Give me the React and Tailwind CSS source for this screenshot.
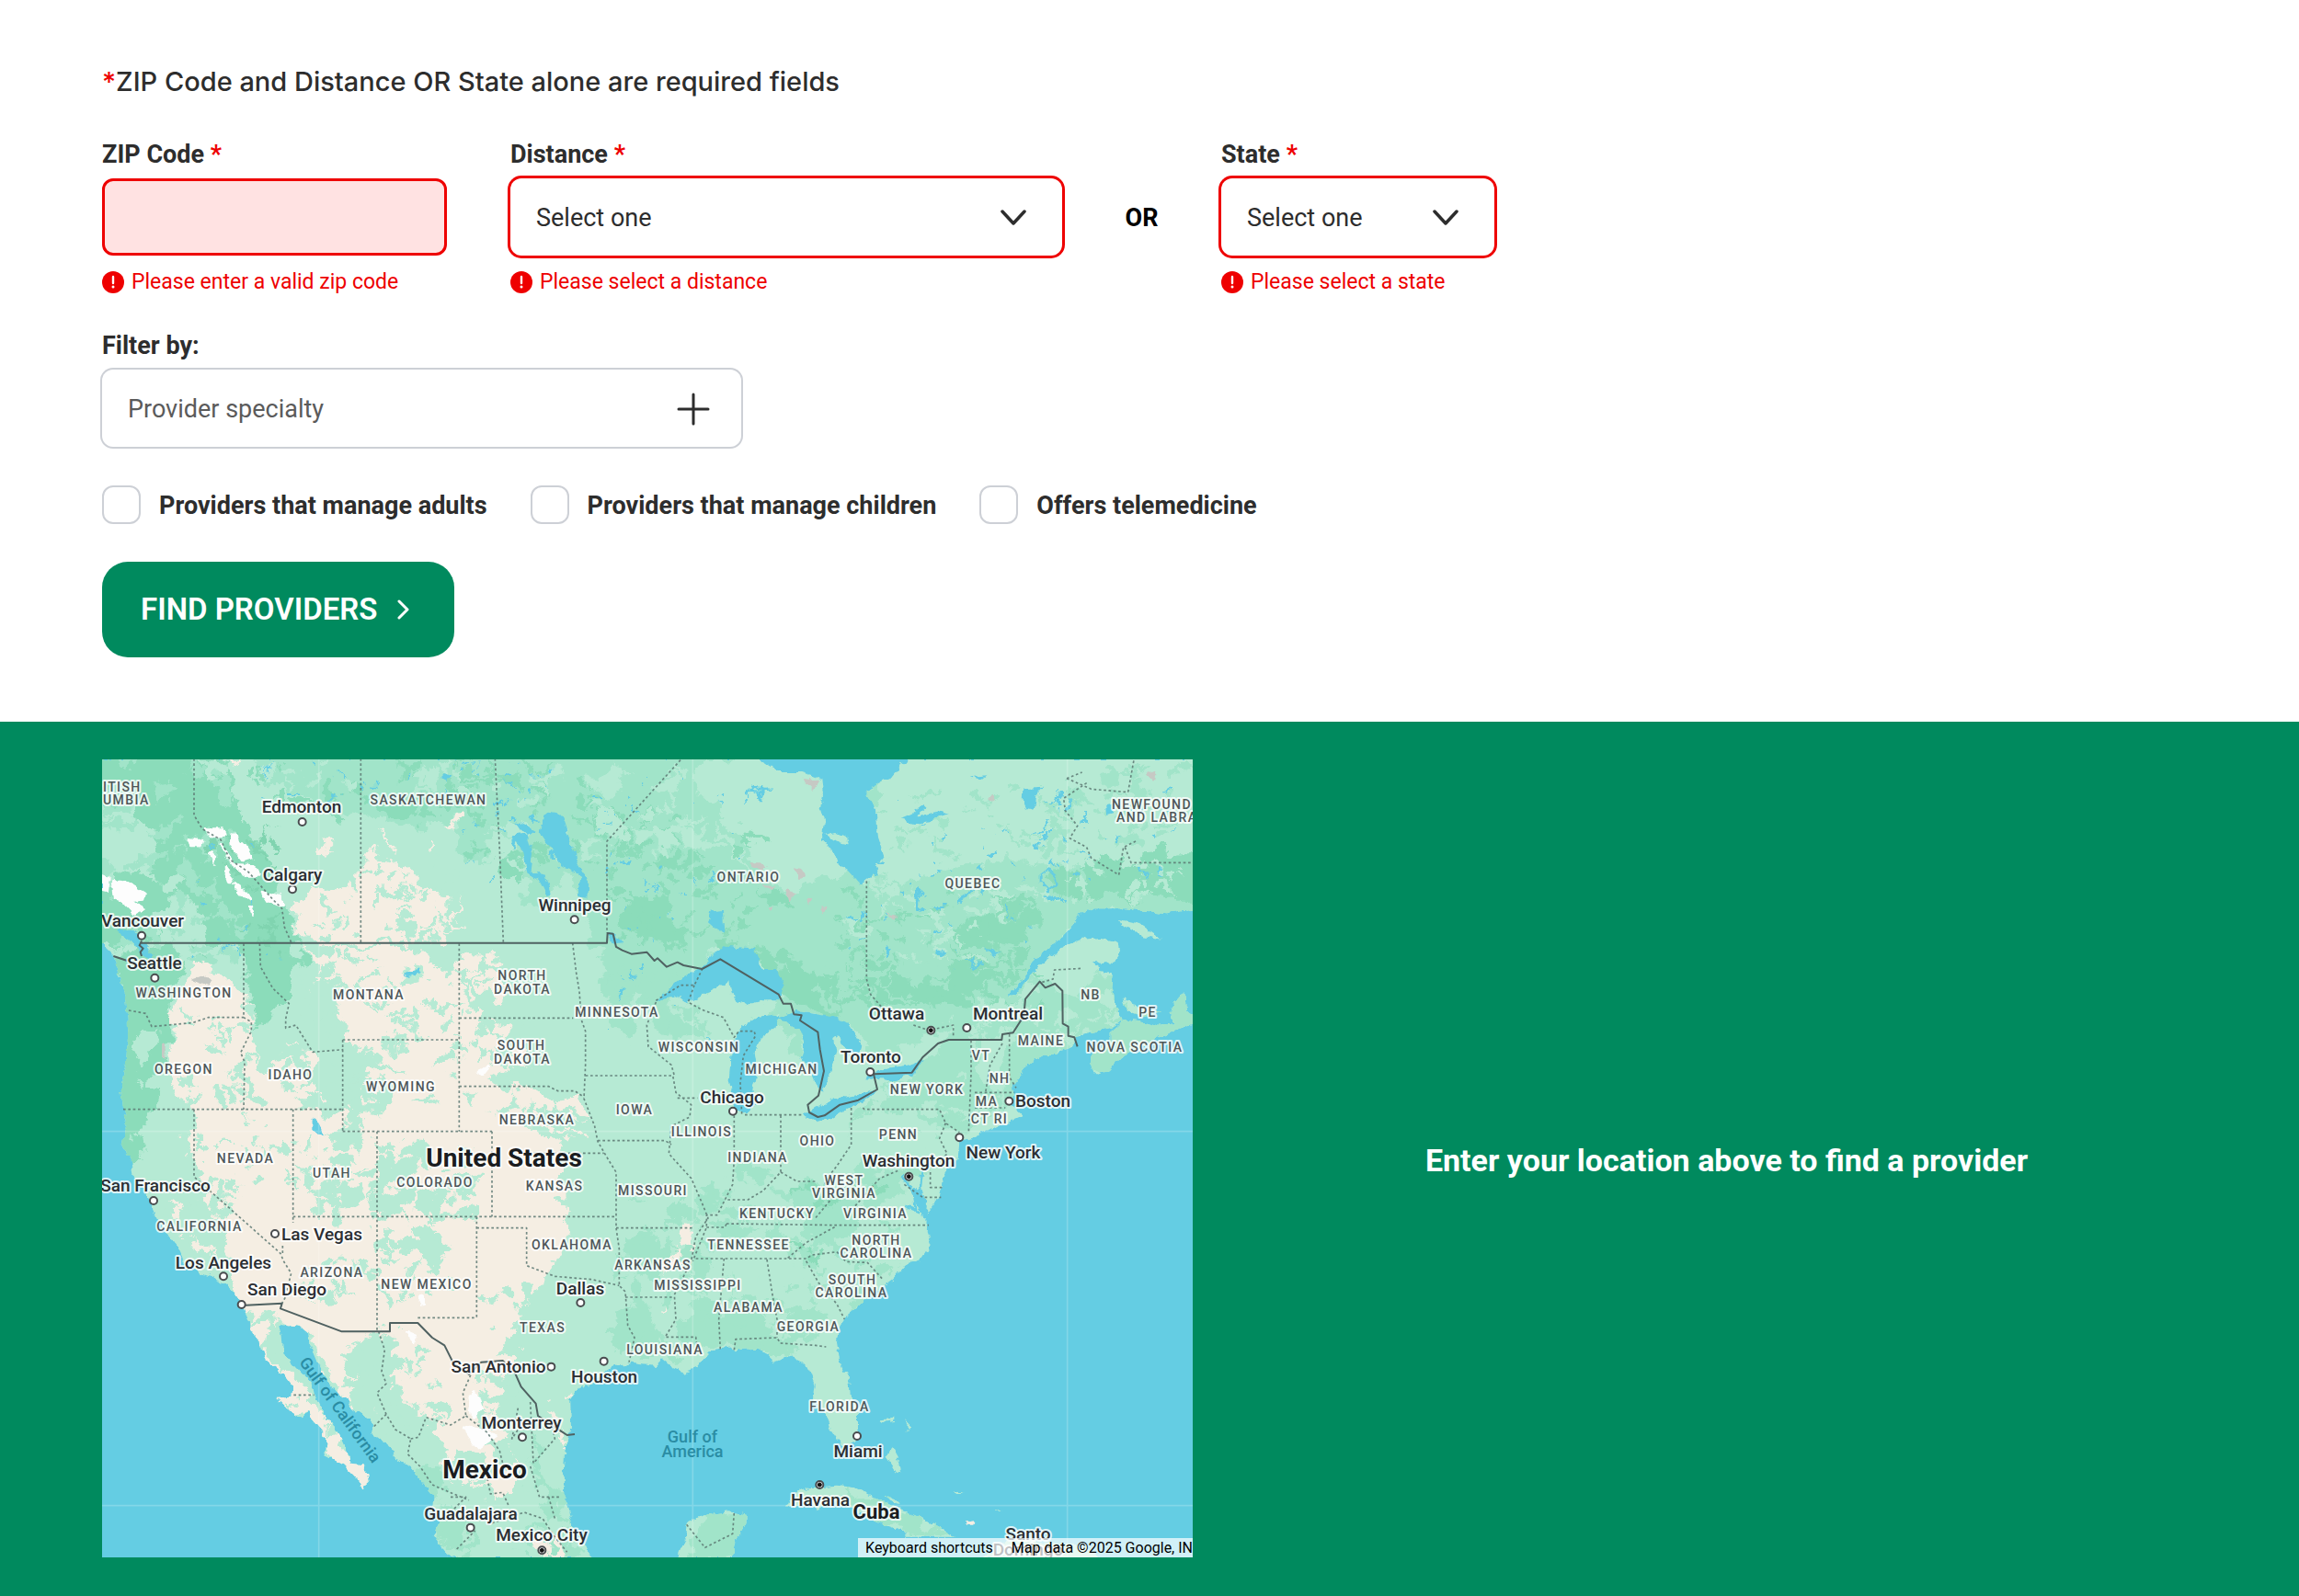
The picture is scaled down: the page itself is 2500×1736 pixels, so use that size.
import React from "react";

/* ---------- small icons ---------- */

function ErrorIcon() {
  return (
    <svg viewBox="0 0 24 24" className="size-6 shrink-0" aria-hidden="true">
      <circle cx="12" cy="12" r="12" fill="#ee0000" />
      <path d="M12 6v7" stroke="#fff" strokeWidth="2.4" strokeLinecap="round" />
      <circle cx="12" cy="17" r="1.5" fill="#fff" />
    </svg>
  );
}

function ChevronDown() {
  return (
    <svg viewBox="0 0 28 18" className="pointer-events-none absolute top-1/2 right-[39px] h-[18px] w-7 -translate-y-1/2" aria-hidden="true">
      <path d="M2 3L14 16L26 3" fill="none" stroke="#2d2d2d" strokeWidth="3.5" strokeLinecap="round" strokeLinejoin="round" />
    </svg>
  );
}

/* ---------- form parts ---------- */

function FieldLabel({ htmlFor, children }) {
  return (
    <label htmlFor={htmlFor} className="mb-2.5 block text-[27px] font-bold leading-8 text-[#2d2d2d]">
      {children} <span className="text-[#ee0000]">*</span>
    </label>
  );
}

function FieldError({ id, children }) {
  return (
    <p id={id} className="mt-[15px] flex items-center gap-2 text-[23px] leading-7 text-[#ee0000]">
      <ErrorIcon />
      {children}
    </p>
  );
}

function SelectField({ id, label, error, width }) {
  return (
    <div className={width}>
      <FieldLabel htmlFor={id}>{label}</FieldLabel>
      <div className="relative">
        <select
          id={id}
          aria-describedby={id + "-error"}
          className="block h-[84px] w-full appearance-none rounded-xl bg-white pt-0.5 pr-20 pl-7 text-[27px] text-[#2d2d2d] ring-3 ring-[#ee0000] outline-none"
        >
          <option>Select one</option>
        </select>
        <ChevronDown />
      </div>
      <FieldError id={id + "-error"}>{error}</FieldError>
    </div>
  );
}

function Check({ id, label }) {
  return (
    <div className="flex items-center gap-5">
      <input
        id={id}
        type="checkbox"
        className="size-[42px] shrink-0 appearance-none rounded-xl border-2 border-[#cdd0d6] bg-white checked:bg-[#008a5e]"
      />
      <label htmlFor={id} className="pt-0.5 text-[27px] font-bold leading-8 text-[#2d2d2d]">
        {label}
      </label>
    </div>
  );
}

/* ---------- map ---------- */
/* Geometry is in units of a third of a pixel; labels are in pixels. */

const SEA = "#64cde3";
const LIGHT = "#b6ead4";
const MID = "#a1e4c9";
const DEEP = "#8bdcba";
const SAND = "#f5eee3";

const MAINLAND =
  "M0 0V600L40 640L50 680L62 730L76 765L86 850L88 900L80 1000L62 1080L72 1140L85 1190L65 1260L95 1305L105 1365L130 1395L160 1445L175 1490L200 1530L255 1605L275 1650L340 1685L390 1705L440 1745L465 1790L485 1850L515 1905L535 1960L590 2005L625 2050L622 2085L570 2087L610 2125L655 2155L672 2128L685 2155L720 2195L735 2235L725 2270L790 2305L830 2345L850 2383L875 2360L870 2330L850 2305L815 2300L795 2250L770 2195L735 2145L700 2085L690 2045L650 2005L595 1945L590 1885L583 1845L650 1853L680 1880L682 1915L720 2005L750 2055L800 2085L815 2115L870 2155L890 2175L880 2200L950 2250L960 2280L1010 2315L1060 2375L1085 2405L1080 2450L1105 2495L1085 2535L1120 2585L1150 2610H1600L1580 2565L1545 2525L1530 2475L1510 2405L1508 2325L1515 2240L1530 2195L1528 2095L1550 2065L1600 2040L1670 1985L1730 1970L1810 1980L1830 1960L1860 1985L1905 2003L1940 1992L1970 1955L1990 1933L2030 1927L2040 1913L2060 1930L2140 1925L2175 1945L2200 1970L2260 1945L2310 1995L2330 2045L2325 2085L2365 2145L2385 2195L2415 2240L2455 2242L2472 2200L2472 2125L2445 2080L2440 2035L2410 1965L2400 1905L2405 1865L2430 1820L2490 1770L2580 1700L2620 1655L2670 1640L2705 1585L2690 1545L2693 1505L2670 1475L2640 1420L2655 1400L2695 1440L2690 1485L2720 1450L2745 1395L2750 1350L2795 1305L2800 1250L2900 1215L3010 1165L2970 1130L2975 1060L3020 1000L3065 975L3100 965L3160 945L3185 905L3230 895L3290 880L3330 855L3310 810L3295 750L3300 700L3260 690L3230 665L3300 672L3325 635L3320 600L3260 585L3200 590L3140 615L3080 660L3040 700L2980 770L2960 775L3020 700L3060 640L3140 580L3165 550L3190 510L3240 490L3340 490L3470 505L3570 490V0Z";
const NOVA_SCOTIA =
  "M3290 892L3340 850L3400 862L3450 875L3500 868L3485 830L3510 780L3535 765L3540 825L3570 840V865L3490 890L3400 935L3330 975L3290 1015L3250 1032L3228 1010L3225 975L3290 925Z";
const ISLANDS =
  "M3335 780L3360 800L3460 825L3400 845L3345 825ZM3320 525L3390 540L3465 590L3400 580L3330 545ZM1880 2610L1905 2545L1910 2495L1960 2470L2050 2458L2105 2468L2105 2495L2070 2555L2060 2610ZM2235 2445L2250 2405L2310 2380L2400 2372L2460 2380L2530 2415L2600 2445L2700 2490L2790 2540L2625 2540L2620 2520L2550 2495L2460 2455L2400 2420L2335 2455L2300 2425ZM2540 2158L2590 2153V2160L2545 2165ZM2618 2153L2638 2175L2625 2200L2630 2175ZM2578 2250L2600 2290L2608 2330L2595 2330L2562 2280ZM2780 2388L2810 2400L2790 2400ZM2550 2405L2600 2425L2610 2435L2570 2420ZM2915 2447L2940 2460L2920 2455ZM2870 2610L2950 2560L3000 2550L3200 2570L3260 2610Z";

const BAYS = [
  "M2145 0L2180 25L2210 45L2290 45L2350 65L2355 120L2345 160L2360 210L2355 265L2390 310L2400 340L2440 370L2475 410L2500 395L2520 375L2535 380L2525 350L2555 320L2535 260L2528 170L2495 100L2580 60L2630 0Z",
  "M1810 790L1900 710L1960 680L2030 610L2130 620L2160 690L2205 690L2225 740L2215 790L2160 790L2100 805L2060 780L2050 730L1990 755L1950 780L1910 795L1880 775Z",
  "M2060 930L2090 875L2140 845L2212 838L2200 880L2150 915L2132 960L2140 1020L2125 1080L2135 1130L2105 1165L2065 1140L2048 1050Z",
  "M2205 845L2270 825L2400 845L2440 870L2482 935L2475 960L2430 950L2405 905L2392 915L2398 960L2375 1040L2352 1085L2330 1060L2310 1010L2285 975L2295 925L2280 885Z",
  "M2290 1165L2330 1140L2400 1108L2530 1082L2500 1110L2420 1150L2380 1175L2340 1187Z",
  "M2490 1045L2530 1015L2640 1000L2682 985L2655 1030L2580 1050Z",
  "M1445 178L1505 185L1530 260L1550 330L1588 410L1585 455L1552 450L1565 385L1500 345L1460 285L1430 240Z",
  "M1340 250L1390 245L1407 310L1400 370L1450 380L1470 440L1452 445L1430 400L1385 370L1375 300L1355 275L1345 300ZM1345 205L1370 210L1420 238L1400 248L1365 235Z",
  "M1990 500L2028 495L2032 570L2000 552L1980 535Z",
  "M50 560L110 565L135 600L170 640L160 655L130 640L90 590Z",
  "M685 1173L710 1190L730 1232L700 1220Z",
  "M985 710L1035 685L1040 700L1000 715Z",
  "M3010 100L3070 95L3050 120L3040 170L3020 165L3008 140Z",
  "M2605 195L2640 180L2680 155L2690 165L2660 190L2740 170L2765 180L2700 205L2650 210Z",
  "M3275 150L3305 145L3300 175L3280 180Z",
  "M2800 470L2810 440L2850 425L2820 450L2808 478Z",
  "M2880 620L2930 630L2915 648Z",
  "M1652 565L1675 570L1700 600L1670 605Z",
  "M2840 60L2890 55L2870 72Z",
  "M1105 65L1125 45L1145 55L1125 75Z",
];

const SANDS = [
  "M670 612L1040 612L1030 640L1090 650L1165 700L1200 860L1320 855L1290 905L1350 930L1400 1000L1300 1020L1240 1060L1350 1062L1460 1112L1510 1100L1550 1090L1600 1170L1500 1150L1430 1140L1390 1190L1440 1240L1500 1290L1500 1405L1520 1495L1550 1525L1490 1605L1480 1665L1410 1745L1390 1805L1350 1865L1350 1955L1300 2040L1290 2160L1360 2265L1350 2415L1290 2455L1200 2400L1100 2320L1120 2270L1085 2165L1020 2125L940 2005L910 1905L810 1890L840 1990L850 2080L900 2160L880 2175L815 2115L720 2005L682 1915L680 1880L560 1810L560 1945L700 2085L810 2250L900 2330L850 2403L705 2270L705 2235L540 2087L592 2085L595 2050L505 1960L465 1790L440 1720L390 1650L310 1610L180 1430L200 1430L300 1560L380 1640L400 1560L330 1400L300 1305L290 1240L300 1150L235 1070L240 950L222 860L260 770L310 650L370 700L470 760L510 830L490 870L500 960L540 1015L620 930L690 1000L700 1100L640 1140L790 1160L850 1060L880 960L800 900L770 780L710 740L680 660Z",
  "M620 550L650 460L700 410L840 425L862 300L940 320L1000 360L1060 420L1150 480L1185 540L1100 592L750 600L650 585Z",
  "M352 0L480 0L440 25Z",
  "M1950 1660L1880 1590L1900 1540L1940 1505L1935 1560L1900 1600Z",
  "M1835 1680L1860 1600L1885 1640L1855 1690Z",
  "M1815 1810L1835 1775L1845 1790L1825 1812Z",
  "M1500 2110L1530 2070L1540 2080L1510 2115ZM1440 2115L1470 2120L1480 2145L1460 2150Z",
  "M1490 2200L1520 2180L1515 2240L1500 2260Z",
  "M1380 2560L1480 2550L1530 2600L1420 2610Z",
  "M1730 232L1750 245L1790 240L1795 252L1760 265Z",
  "M1100 215L1150 200L1190 215L1160 230Z",
  "M1085 250L1100 300L1070 310ZM900 245L980 285L970 290L910 265ZM700 262L760 280L765 305L735 300Z",
];

const FORESTS = [
  ["M0 -30H340L440 60L430 140L470 230L560 330L570 420L600 520L660 620L680 680L610 700L600 790L560 850L510 880L500 800L475 740L470 610L330 600L310 520L230 430L170 380L160 230L90 160L-30 150Z", DEEP],
  ["M40 640L240 600L260 680L230 780L230 900L215 1010L160 1060L200 1130L120 1200L140 1300L70 1305L35 1260L55 1190L42 1080L58 900L42 730Z", DEEP],
  ["M-30 380L200 400L260 480L200 560L130 600L-30 600Z", DEEP],
  ["M480 -30H2145L1960 20L1930 90L2010 170L2080 230L2110 310L2160 360L2240 430L2400 370L2500 420L2700 380L2900 330L3150 350L3600 330V520L3340 520L3240 490L3165 550L3040 700L2960 775L2860 800L2700 900L2540 1000L2480 920L2400 845L2210 840L2220 740L2160 690L2130 620L2030 610L1960 680L1900 710L1850 790L1900 860L1950 900L1880 920L1800 880L1770 800L1650 780L1640 640L1580 560L1560 450L1500 380L1480 480L1400 470L1320 330L1190 320L1150 200L980 220L830 180L720 140L560 90Z", MID],
  ["M2400 760L2440 700L2560 730L2700 720L2780 680L2960 640L3060 600L2960 720L2800 790L2640 830L2520 800Z", DEEP],
  ["M2760 560L2860 520L2980 530L3040 500L3060 560L2960 600L2860 620Z", DEEP],
  ["M3080 370L3160 360L3220 420L3200 480L3120 430Z", DEEP],
  ["M2150 700L2130 620L2250 640L2400 740L2460 800L2380 830L2240 790Z", DEEP],
  ["M3200 350L3380 340L3400 310L3600 300V470L3440 470L3300 450L3240 470Z", DEEP],
  ["M1700 480L1800 440L1860 500L1940 560L1900 620L1800 590L1700 540Z", DEEP],
  ["M2150 430L2220 440L2260 480L2180 490Z", DEEP],
  ["M1310 370L1350 330L1360 390L1340 405Z", DEEP],
  ["M2810 790L2880 830L2960 860L3030 790L3060 740L3100 745L3135 760L3300 700L3325 850L3185 935L3100 995L3020 1000L3000 1060L2990 1130L2800 1220L2680 1200L2640 1140L2490 1150L2440 1240L2500 1100L2650 1040L2740 920Z", MID],
  ["M2340 1500L2480 1330L2540 1290L2700 1350L2560 1460L2440 1540L2360 1620L2250 1650Z", MID],
  ["M2240 1430L2330 1380L2400 1460L2330 1520Z", MID],
  ["M1700 1560L1850 1550L1860 1620L1780 1700L1720 1680Z", MID],
  ["M1850 1440L1930 1440L1940 1500L1890 1530L1850 1490Z", MID],
  ["M1690 1900L1740 1700L1790 1800L1830 1940L1740 1960Z", MID],
  ["M1880 1850L1960 1730L2100 1760L2200 1870L2280 1940L2200 1965L2100 1920L2020 1915L1960 1940Z", MID],
  ["M2130 845L2240 810L2200 830L2290 890L2290 980L2240 900L2180 880Z", MID],
  ["M3250 862L3400 832L3535 740L3570 860L3290 1045L3198 1010Z", MID],
  ["M2390 2400L2460 2380L2600 2445L2780 2535L2620 2520Z", MID],
  ["M1950 2450L2130 2448L2080 2600L1900 2620L1960 2530Z", MID],
  ["M1400 2160L1430 2300L1500 2420L1540 2500L1470 2480L1400 2380Z", MID],
  ["M1040 2290L1200 2430L1160 2560L1090 2540L1100 2440L1040 2360Z", MID],
];

const LIGHTS = [
  "M10 220L90 190L150 240L160 330L90 390L20 350Z",
  "M200 390L260 370L280 410L240 450L200 440Z",
  "M190 500L280 450L330 520L300 590L220 560Z",
  "M330 20L410 30L400 80L340 70Z",
  "M130 900L170 880L160 980L125 1000Z",
  "M110 1040L145 1035L140 1065L115 1070Z",
  "M2000 190L2060 240L2080 300L2110 330L2150 400L2060 320Z",
  "M2950 900L2940 950L2960 1100L2850 1050L2880 940Z",
  "M3440 390L3460 390L3500 450L3470 440Z",
];

const SNOW =
  "M335 230L395 230L400 250L360 255ZM425 245L460 275L490 320L460 330L430 290ZM285 262L330 270L325 285L295 285ZM390 280L430 345L500 350L520 385L480 385L430 350ZM355 310L370 320L365 340ZM405 360L430 390L420 405ZM430 410L490 455L470 458ZM525 435L585 450L595 480L545 465ZM480 480L498 480L490 508ZM0 380L25 390L20 435L0 430ZM40 400L80 405L140 440L135 460L100 465L135 490L110 505L75 470L45 460ZM1000 1870L1025 1880L1020 1910ZM1038 1765L1052 1760V1778L1038 1780ZM1200 2090L1220 2060L1240 2120L1210 2150ZM1180 2180L1240 2190L1290 2210L1230 2250L1200 2210ZM1230 1020L1265 1005L1235 1040Z";
const ROCK =
  "M295 720L330 708L365 725L355 740L320 730ZM198 930L213 935L210 985L198 975ZM2285 62L2340 70L2325 105ZM2115 340L2150 340L2175 360L2130 360ZM2265 355L2290 360L2295 385L2275 390ZM2235 425L2265 435L2245 475ZM2150 410L2200 415L2195 428ZM2300 460L2320 455L2310 480ZM2340 490L2370 485L2350 508ZM2175 485L2195 480L2185 495ZM2560 510L2600 515L2590 525ZM2890 125L2915 120L2910 140ZM3410 55L3440 40L3435 80Z";

/* Deterministic scatter of irregular patches: x0, y0, x1, y1, count, radius, colour */
const SCATTER = [
  [10, 10, 420, 380, 26, 26, MID],
  [340, 240, 600, 660, 26, 14, "#80d4b0"],
  [10, 420, 460, 660, 22, 20, MID],
  [480, 10, 1200, 200, 26, 20, DEEP],
  [480, 10, 1200, 130, 14, 20, LIGHT],
  [1200, 20, 1650, 330, 34, 17, DEEP],
  [1260, 60, 1700, 480, 26, 22, LIGHT],
  [1650, 180, 2150, 620, 56, 16, DEEP],
  [1650, 30, 2000, 300, 22, 24, LIGHT],
  [1650, 660, 2000, 880, 20, 22, MID],
  [2400, 420, 3100, 820, 60, 17, DEEP],
  [2150, 640, 3050, 820, 60, 15, MID],
  [2440, 420, 3000, 660, 30, 16, LIGHT],
  [2500, 90, 3200, 380, 30, 16, MID],
  [3000, 30, 3560, 330, 34, 18, MID],
  [3000, 300, 3560, 480, 30, 14, LIGHT],
  [2480, 1040, 3000, 1300, 34, 18, LIGHT],
  [2850, 760, 3300, 960, 26, 16, LIGHT],
  [1900, 1330, 2600, 1880, 60, 26, MID],
  [1960, 1300, 2640, 1880, 40, 20, LIGHT],
  [2240, 1380, 2560, 1640, 12, 16, DEEP],
  [1680, 1440, 2000, 1960, 30, 20, MID],
  [640, 620, 780, 900, 22, 22, LIGHT],
  [780, 640, 1160, 900, 30, 14, LIGHT],
  [780, 900, 1180, 1180, 22, 18, LIGHT],
  [860, 320, 1180, 590, 40, 14, LIGHT],
  [650, 430, 850, 580, 8, 12, LIGHT],
  [240, 820, 500, 1120, 24, 16, LIGHT],
  [560, 960, 860, 1280, 34, 24, LIGHT],
  [320, 1180, 680, 1440, 20, 12, LIGHT],
  [640, 1300, 860, 1480, 26, 20, LIGHT],
  [900, 1240, 1200, 1620, 50, 25, LIGHT],
  [130, 1380, 420, 1640, 36, 20, LIGHT],
  [680, 1590, 960, 1760, 20, 17, LIGHT],
  [940, 1560, 1160, 1760, 8, 15, LIGHT],
  [820, 1880, 960, 2200, 36, 26, LIGHT],
  [960, 1920, 1120, 2260, 14, 18, LIGHT],
  [1200, 1060, 1460, 1200, 8, 14, LIGHT],
  [1200, 860, 1400, 1040, 14, 16, LIGHT],
  [1260, 1740, 1420, 2100, 20, 18, LIGHT],
  [1240, 2020, 1420, 2440, 38, 20, LIGHT],
  [1100, 2280, 1300, 2480, 24, 22, LIGHT],
  [1180, 620, 1280, 860, 14, 18, SAND],
  [1440, 1180, 1600, 1280, 8, 12, SAND],
  [1120, 2480, 1560, 2600, 20, 18, MID],
  [460, 1800, 560, 1920, 8, 16, LIGHT],
  [640, 2030, 870, 2340, 8, 12, LIGHT],
];
const LAKES = [
  [1200, 20, 1700, 460, 30, 7, SEA],
  [1650, 60, 2150, 600, 30, 6, SEA],
  [2440, 140, 3150, 720, 50, 8, SEA],
  [3150, 60, 3550, 400, 18, 7, SEA],
  [500, 10, 1190, 160, 14, 7, SEA],
  [300, 250, 620, 700, 12, 6, SEA],
  [1600, 640, 2050, 900, 8, 6, SEA],
];

function patches(list, start) {
  let s = start;
  const rnd = () => {
    s = (s * 16807) % 2147483647;
    return s / 2147483647;
  };
  return list.map(([x0, y0, x1, y1, n, r, fill], i) => {
    let d = "";
    for (let k = 0; k < n; k++) {
      const cx = x0 + rnd() * (x1 - x0);
      const cy = y0 + rnd() * (y1 - y0);
      const size = r * (0.6 + rnd());
      const tilt = (rnd() - 0.4) * 2;
      const stretch = 1 + rnd() * 0.7;
      const count = 9;
      const pts = [];
      for (let p = 0; p < count; p++) {
        const a = (p / count) * Math.PI * 2;
        const q = size * (0.55 + rnd() * 0.7);
        const u = Math.cos(a) * q * stretch;
        const v = (Math.sin(a) * q) / stretch;
        pts.push([
          Math.round(cx + u * Math.cos(tilt) - v * Math.sin(tilt)),
          Math.round(cy + u * Math.sin(tilt) + v * Math.cos(tilt)),
        ]);
      }
      d += "M" + pts.map((pt) => pt.join(" ")).join("L") + "Z";
    }
    return <path key={i} d={d} fill={fill} />;
  });
}

const FRONTIERS =
  "M130 602H1650L1652 570L1670 572L1680 615L1700 626L1730 638L1780 632L1805 660L1815 652L1845 680L1880 665L1900 675L1960 687L2020 655L2210 770L2225 800L2250 800L2260 835L2285 838L2280 855L2338 893L2345 950L2358 1020L2340 1100L2305 1130L2310 1155L2338 1170L2360 1165L2410 1130L2470 1115L2532 1080L2520 1030L2645 1025L2680 975L2730 930L2765 918H2938L2940 900L2975 895L3010 840L3015 785L3062 728L3080 748L3112 735L3136 758L3137 865L3155 875V905L3175 910L3185 940M40 645L85 660M132 595L125 610L137 620L128 632L132 645M458 1785L590 1778L585 1795L785 1870H942V1842H1033L1080 1890L1120 1915L1150 1975L1200 2010L1240 1970L1310 1965L1350 2005L1370 2050L1418 2105L1425 2145L1500 2195L1520 2208L1545 2205";

const STATES =
  "M303 0V185L330 230L390 265L420 330L480 370L560 460L590 490L598 550L620 600M847 0V600M1285 0L1300 300L1312 600M1890 5L1650 270V570M1538 602L1550 700L1560 760L1565 830M465 604V845L490 860V890L455 960L468 990L465 1145M90 822L145 832L165 875L300 862L350 845H465M517 604L520 680L560 750L613 800L602 850V880L635 870L690 958L790 950M72 1145H788M788 918H1168M788 918V1217M1168 604V1217M788 1217H1275M1168 847H1540M1168 1070H1460L1490 1085L1545 1085L1575 1105M303 1145V1365L585 1615L595 1640L620 1680L600 1760L590 1778M626 1145V1515M592 1590V1620M626 1495H1680M900 1217V1870M1225 1495V1825M1275 1217V1495M1225 1532H1388V1655L1480 1690L1600 1700L1690 1720M1033 1825H1225M1562 840L1580 890V1000L1575 1110L1610 1200L1620 1250L1655 1310L1680 1350V1532L1690 1600V1720L1710 1740L1718 1850L1740 1890L1722 1970M1380 1288H1640M1580 1035H1865L1875 1090L1925 1130L1920 1170L1860 1200L1852 1290L1925 1370L1960 1450L1980 1500L1940 1560L1925 1640L1870 1750L1875 1830L1840 1888H1940L1945 1930M1620 1247H1840L1860 1260M1680 1532H1930M1710 1758H1865M1810 795L1780 870L1785 940L1860 1000L1870 1035M1720 800M1810 790L1890 740H1935L1960 690M1935 740L1915 795L1960 820L2030 845L2065 910L2080 890L2130 890L2135 905L2095 970L2085 1060L2090 1160M1880 1108H1945M2065 1165V1310L2060 1390L2035 1440L2010 1490L1975 1490L1975 1530L1930 1640M2100 1163H2290M2217 1165V1350L2160 1410L2110 1440L2035 1440M2217 1350L2270 1380H2330M2447 1140V1260L2400 1330L2360 1380L2380 1440L2330 1500M2040 1518L2400 1523H2700M1975 1530H2035L2040 1518M1940 1632H2300L2320 1620L2400 1610L2430 1642L2500 1645L2550 1700M2240 1630L2300 1580L2400 1525M2032 1632L2015 1830L2020 1930M2172 1635L2190 1750L2205 1830V1890M2065 1930L2070 1895L2205 1890L2215 1908L2330 1915L2365 1920M2300 1640L2340 1710L2400 1780L2425 1830M2485 1140L2490 1145H2735L2755 1190L2800 1220M2755 1190L2735 1240L2760 1290L2740 1310M2838 920V1030L2830 1220M2940 930L2900 1000L2885 1090M2963 900V1040L2985 1075M2850 1090H2980M2850 1140H2950M2497 400V720L2510 770L2545 810M2650 870L2700 887L2780 870V910M3070 730L3105 720L3110 690L3200 685M3150 65L3230 100L3350 110L3370 0M3150 65L3200 45M3215 80L3140 130L3145 170L3185 220L3160 260L3215 290L3230 325L3320 380L3335 290L3375 270M3340 290L3360 340H3560M2460 1460L2540 1370L2600 1345M2705 1350V1400H2745M2620 1390L2680 1432H2740M628 2077H695M905 1870L925 1930L915 2000L930 2040L900 2070L930 2140L960 2190L1010 2220L1000 2270L1040 2310L1080 2370L1150 2400L1200 2420M930 2140L890 2180M1010 2220L1035 2215L1060 2150L1140 2175L1190 2145L1180 2070L1215 1990M1190 2145L1260 2200L1300 2260L1310 2300M1260 2350L1270 2400L1310 2395L1330 2440M1360 2120L1340 2220L1380 2160M1400 2100L1410 2300L1480 2220L1470 2180M1400 2310L1430 2410H1500M1260 2500L1380 2460L1440 2480L1480 2540L1520 2590M1460 2410L1480 2480M1160 2580L1220 2520M1910 2500L1970 2575L2060 2530L2065 2460M1140 2410L1190 2410L1150 2450";

const REGIONS = [
  ["SASKATCHEWAN", 1068, 150], ["ONTARIO", 2113, 403], ["QUEBEC", 2844, 423],
  ["WASHINGTON", 270, 781], ["MONTANA", 874, 785], ["NORTH", 1373, 724], ["DAKOTA", 1375, 767],
  ["MINNESOTA", 1682, 843], ["SOUTH", 1371, 952], ["DAKOTA", 1375, 995], ["WISCONSIN", 1951, 958],
  ["MICHIGAN", 2220, 1030], ["OREGON", 271, 1029], ["IDAHO", 617, 1047], ["WYOMING", 979, 1086],
  ["NEBRASKA", 1423, 1195], ["IOWA", 1740, 1161], ["ILLINOIS", 1960, 1234], ["OHIO", 2338, 1263],
  ["INDIANA", 2141, 1318], ["PENN", 2600, 1243], ["NEW YORK", 2693, 1096], ["VT", 2871, 984],
  ["NH", 2930, 1058], ["MA", 2890, 1133], ["CT RI", 2897, 1190], ["MAINE", 3067, 935],
  ["NB", 3227, 786], ["PE", 3415, 843], ["NOVA SCOTIA", 3371, 958], ["NEVADA", 472, 1320],
  ["UTAH", 753, 1369], ["COLORADO", 1090, 1397], ["KANSAS", 1480, 1411], ["MISSOURI", 1800, 1425],
  ["WEST", 2425, 1392], ["VIRGINIA", 2425, 1435], ["VIRGINIA", 2525, 1501], ["KENTUCKY", 2205, 1501],
  ["TENNESSEE", 2111, 1601], ["NORTH", 2529, 1587], ["CAROLINA", 2529, 1630], ["SOUTH", 2452, 1715],
  ["CAROLINA", 2449, 1758], ["OKLAHOMA", 1536, 1601], ["ARKANSAS", 1801, 1667],
  ["MISSISSIPPI", 1948, 1734], ["ALABAMA", 2113, 1806], ["GEORGIA", 2306, 1869], ["TEXAS", 1440, 1873],
  ["LOUISIANA", 1839, 1945], ["CALIFORNIA", 321, 1543], ["ARIZONA", 752, 1692],
  ["NEW MEXICO", 1062, 1731], ["FLORIDA", 2410, 2131],
];
const CUT_REGIONS = [
  ["ITISH", 6, 107], ["UMBIA", 6, 150], ["NEWFOUND", 3297, 165], ["AND LABRA", 3312, 208],
];

/* name, label centre x, baseline y, dot x, dot y, capital */
const CITIES = [
  ["Edmonton", 655, 178, 656, 207], ["Calgary", 625, 398, 624, 427], ["Vancouver", 135, 550, 132, 578],
  ["Seattle", 175, 688, 175, 716], ["Winnipeg", 1545, 499, 1544, 526], ["Chicago", 2059, 1124, 2061, 1151],
  ["Ottawa", 2596, 853, 2707, 887, true], ["Montreal", 2957, 852, 2824, 879],
  ["Toronto", 2511, 993, 2509, 1023], ["Boston", 3072, 1136, 2962, 1118],
  ["New York", 2942, 1304, 2800, 1237], ["Washington", 2634, 1332, 2635, 1364, true],
  ["San Francisco", 178, 1413, 171, 1443], ["Las Vegas", 720, 1571, 567, 1551],
  ["Los Angeles", 400, 1664, 399, 1690], ["San Diego", 606, 1753, 458, 1782],
  ["Dallas", 1562, 1749, 1564, 1776], ["San Antonio", 1295, 2005, 1468, 1985],
  ["Houston", 1640, 2036, 1640, 1967], ["Monterrey", 1371, 2188, 1374, 2215],
  ["Guadalajara", 1207, 2483, 1205, 2510], ["Mexico City", 1437, 2554, 1438, 2584, true],
  ["Miami", 2470, 2280, 2466, 2211], ["Havana", 2347, 2440, 2344, 2370, true],
];

const px = (n) => Math.round(n / 3);

function ProviderMap() {
  return (
    <svg viewBox="1 1 1186 868" className="block h-auto w-full" role="img" aria-label="Map of North America">
      <defs>
        <clipPath id="land">
          <path d={MAINLAND} />
          <path d={NOVA_SCOTIA} />
          <path d={ISLANDS} />
        </clipPath>
        <filter id="terrain" filterUnits="userSpaceOnUse" x="-40" y="-40" width="3660" height="2700" colorInterpolationFilters="sRGB">
          <feTurbulence type="fractalNoise" baseFrequency="0.014" numOctaves="4" seed="7" />
          <feDisplacementMap in="SourceGraphic" scale="110" xChannelSelector="R" yChannelSelector="G" />
        </filter>
        <filter id="coast" filterUnits="userSpaceOnUse" x="-40" y="-40" width="3660" height="2700" colorInterpolationFilters="sRGB">
          <feTurbulence type="fractalNoise" baseFrequency="0.035" numOctaves="3" seed="3" />
          <feDisplacementMap in="SourceGraphic" scale="24" xChannelSelector="R" yChannelSelector="G" />
        </filter>
      </defs>
      <rect width="1188" height="870" fill={SEA} />
      <g transform="scale(0.33333)" strokeLinejoin="round">
        <g filter="url(#coast)">
          <g clipPath="url(#land)">
            <rect width="3570" height="2620" fill={LIGHT} />
            <g filter="url(#terrain)">
              {SANDS.map((d, i) => <path key={i} d={d} fill={SAND} />)}
              {FORESTS.map(([d, fill], i) => <path key={i} d={d} fill={fill} />)}
              {LIGHTS.map((d, i) => <path key={i} d={d} fill={LIGHT} />)}
              {patches(SCATTER, 4211)}
              {patches(LAKES, 977)}
            </g>
            <path d={ROCK} fill="#c6c9c4" />
            <path d={SNOW} fill="#fdfdfd" stroke="#fdfdfd" strokeWidth="8" />
          </g>
          {BAYS.map((d, i) => <path key={i} d={d} fill={SEA} />)}
          <path d="M2400 240L2430 255L2436 280L2400 272L2365 248Z" fill={LIGHT} />
          <path d="M2820 2488L2850 2485L2845 2498L2822 2498Z" fill={SAND} />
          <path d="M3065 375L3090 360L3115 385L3110 410L3090 430L3065 405Z" fill="none" stroke={SEA} strokeWidth="6" />
          <path d="M2655 1475L2650 1420L2615 1360M2680 1330L2672 1400L2690 1500M2670 1480L2620 1460" fill="none" stroke={SEA} strokeWidth="9" />
        </g>
        <path d="M710 0V2610M1930 0V2610M3152 0V2610M0 1217H3570M0 2438H3570" stroke="#fff" strokeOpacity="0.2" strokeWidth="5" />
        <path d={STATES} fill="none" stroke="#5c7872" strokeOpacity="0.85" strokeWidth="5" strokeDasharray="8 8" />
        <path d={FRONTIERS} fill="none" stroke="#4f6161" strokeWidth="6" />
        {CITIES.map(([name, , , x, y, capital]) => (
          <g key={name}>
            <circle cx={x} cy={y} r="12" fill="#fff" stroke="#4a4d50" strokeWidth="6" />
            {capital && <circle cx={x} cy={y} r="6" fill="#111" stroke="#111" strokeWidth="3" />}
          </g>
        ))}
      </g>
      <g fontFamily="Roboto, sans-serif" textAnchor="middle" stroke="#fff" strokeOpacity="0.8" strokeLinejoin="round" style={{ paintOrder: "stroke" }}>
        <g className="tracking-widest" fontSize="14" fontWeight="500" fill="#4e5659" strokeWidth="4">
          {REGIONS.map(([name, x, y], i) => <text key={i} x={px(x)} y={px(y)}>{name}</text>)}
          {CUT_REGIONS.map(([name, x, y], i) => <text key={i} x={px(x)} y={px(y)} textAnchor="start">{name}</text>)}
        </g>
        <g fontSize="19" fontWeight="500" fill="#2b2e33" strokeWidth="4">
          {CITIES.map(([name, x, y]) => <text key={name} x={px(x)} y={px(y)}>{name}</text>)}
          <text x="1008" y="850">Santo</text>
          <text x="1008" y="867">Domingo</text>
        </g>
        <g fontWeight="700" fill="#1a1c1f" strokeWidth="4">
          <text x="843" y="827" fontSize="22">Cuba</text>
          <text x="438" y="444" fontSize="28">United States</text>
          <text x="417" y="783" fontSize="28">Mexico</text>
        </g>
      </g>
      <g fontFamily="Roboto, sans-serif" textAnchor="middle" fontSize="18" fontWeight="500" fill="#2a8ca3">
        <text x="643" y="744">Gulf of</text>
        <text x="643" y="760">America</text>
        <text transform="translate(255 712) rotate(54)">Gulf of California</text>
      </g>
    </svg>
  );
}

/* ---------- page ---------- */

export default function App() {
  return (
    <main className="bg-white font-['Roboto',sans-serif]">
      <form className="px-[111px] pt-[69px] pb-[70px]" onSubmit={(e) => e.preventDefault()}>
        <p className="font-['Inter',sans-serif] text-[29px] font-medium leading-10 text-[#2d2d2d]">
          <span className="text-[#ee0000]">*</span>ZIP Code and Distance OR State alone are required fields
        </p>

        <div className="mt-[43px] flex flex-wrap items-start">
          <div className="mr-[69px] w-[375px]">
            <FieldLabel htmlFor="zip">ZIP Code</FieldLabel>
            <input
              id="zip"
              type="text"
              aria-describedby="zip-error"
              className="block h-[84px] w-full rounded-xl border-3 border-[#ee0000] bg-[#ffe2e2] px-7 text-[27px] outline-none"
            />
            <FieldError id="zip-error">Please enter a valid zip code</FieldError>
          </div>
          <SelectField id="distance" label="Distance" error="Please select a distance" width="w-[600px]" />
          <p className="mt-[43px] flex h-[84px] w-[173px] items-center justify-center text-[27px] font-bold text-black">OR</p>
          <SelectField id="state" label="State" error="Please select a state" width="w-[297px]" />
        </div>

        <h2 className="mt-[39px] text-[27px] font-bold leading-8 text-[#2d2d2d]">Filter by:</h2>
        <button
          type="button"
          className="mt-2.5 flex h-[84px] w-[695px] items-center justify-between rounded-xl bg-white pt-0.5 pr-[34px] pl-7 text-[27px] text-[#5b5b5b] ring-2 ring-[#cdd0d6]"
        >
          Provider specialty
          <svg viewBox="0 0 36 36" className="size-9" aria-hidden="true">
            <path d="M18 2V34M2 18H34" stroke="#2d2d2d" strokeWidth="3" strokeLinecap="round" />
          </svg>
        </button>

        <div className="mt-[42px] flex flex-wrap gap-[47px]">
          <Check id="adults" label="Providers that manage adults" />
          <Check id="children" label="Providers that manage children" />
          <Check id="telemedicine" label="Offers telemedicine" />
        </div>

        <button
          type="submit"
          className="mt-[41px] flex h-[104px] items-center gap-[22px] rounded-[28px] bg-[#008a5e] pr-12 pl-[42px] text-[33px] font-semibold text-white"
        >
          FIND PROVIDERS
          <svg viewBox="0 0 14 22" className="h-[22px] w-3.5" aria-hidden="true">
            <path d="M2 2L11 11L2 20" fill="none" stroke="#fff" strokeWidth="3" strokeLinecap="round" strokeLinejoin="round" />
          </svg>
        </button>
      </form>

      <section className="grid grid-cols-[1186fr_1023fr] items-center gap-[69px] bg-[#008a5e] px-[111px] pt-[41px] pb-[42px]">
        <div className="relative overflow-hidden">
          <ProviderMap />
          <div className="absolute right-0 bottom-0 flex h-[21px] items-center gap-5 bg-white/70 pl-2 text-[16px] leading-5 whitespace-nowrap text-black">
            <button type="button">Keyboard shortcuts</button>
            <span>Map data ©2025 Google, IN</span>
          </div>
        </div>
        <p className="pt-1 text-center text-[34px] font-bold leading-10 text-white">
          Enter your location above to find a provider
        </p>
      </section>
    </main>
  );
}
